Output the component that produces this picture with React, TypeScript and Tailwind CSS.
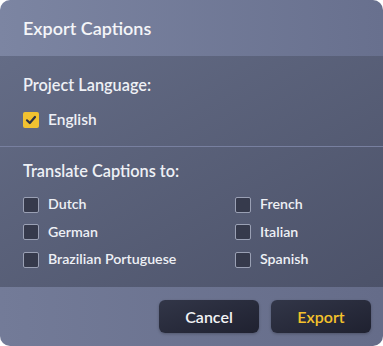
import React from "react";

const font = { fontFamily: "Lato, 'Open Sans', sans-serif" };

function Box({ checked }: { checked?: boolean }) {
  if (checked) {
    return (
      <span className="flex h-[16px] w-[16px] shrink-0 items-center justify-center rounded-[2px] bg-[#f2c230]">
        <svg width="12" height="12" viewBox="0 0 12 12">
          <path d="M2 6.3 L4.8 9 L10 3" fill="none" stroke="#2e3244" strokeWidth="2.2" strokeLinecap="round" strokeLinejoin="round" />
        </svg>
      </span>
    );
  }
  return <span className="h-[16px] w-[16px] shrink-0 rounded-[2px] border border-[#9aa0b4] bg-[#363a4c]" />;
}

function Item({ label, checked, big }: { label: string; checked?: boolean; big?: boolean }) {
  return (
    <div className="flex h-[17px] items-center gap-[9px]">
      <Box checked={checked} />
      <span className={(big ? "text-[15.5px]" : "text-[14.2px]") + " font-semibold leading-none text-[#eef0f5]"}>{label}</span>
    </div>
  );
}

export default function App() {
  return (
    <div className="h-[346px] w-[383px] bg-white" style={font}>
      <div className="flex h-[346px] w-[383px] flex-col overflow-hidden rounded-[10px]">
        <div className="flex h-[56px] items-center bg-gradient-to-r from-[#7c85a2] to-[#68708e] px-[23px]">
          <span className="text-[18px] font-semibold text-[#f4f5f8]">Export Captions</span>
        </div>
        <div className="flex flex-1 flex-col bg-gradient-to-br from-[#646c86] to-[#4c5269]">
          <div className="flex flex-col px-[23px] pt-[19px] pb-[18px]">
            <span className="text-[16.3px] font-semibold leading-[20px] text-[#eef0f5]">Project Language:</span>
            <div className="mt-[16px]">
              <Item label="English" checked big />
            </div>
          </div>
          <div className="h-px bg-[#7880a0]" />
          <div className="flex flex-col px-[23px] pt-[14px]">
            <span className="text-[16.3px] font-semibold leading-[20px] text-[#eef0f5]">Translate Captions to:</span>
            <div className="mt-[15px] grid grid-cols-[200px_1fr] gap-x-[12px] gap-y-[10.5px]">
              <Item label="Dutch" />
              <Item label="French" />
              <Item label="German" />
              <Item label="Italian" />
              <Item label="Brazilian Portuguese" />
              <Item label="Spanish" />
            </div>
          </div>
        </div>
        <div className="flex h-[59px] items-center justify-end gap-[12px] bg-gradient-to-r from-[#737b98] to-[#656c89] pr-[12px]">
          <button className="h-[33px] w-[100px] rounded-[6px] bg-gradient-to-br from-[#323648] to-[#1f2130] text-[16px] font-semibold text-[#f2f3f6] shadow-[0_1px_3px_rgba(0,0,0,0.25)]">
            Cancel
          </button>
          <button className="h-[33px] w-[100px] rounded-[6px] bg-gradient-to-br from-[#323648] to-[#1f2130] text-[16px] font-semibold text-[#f4c22b] shadow-[0_1px_3px_rgba(0,0,0,0.25)]">
            Export
          </button>
        </div>
      </div>
    </div>
  );
}
